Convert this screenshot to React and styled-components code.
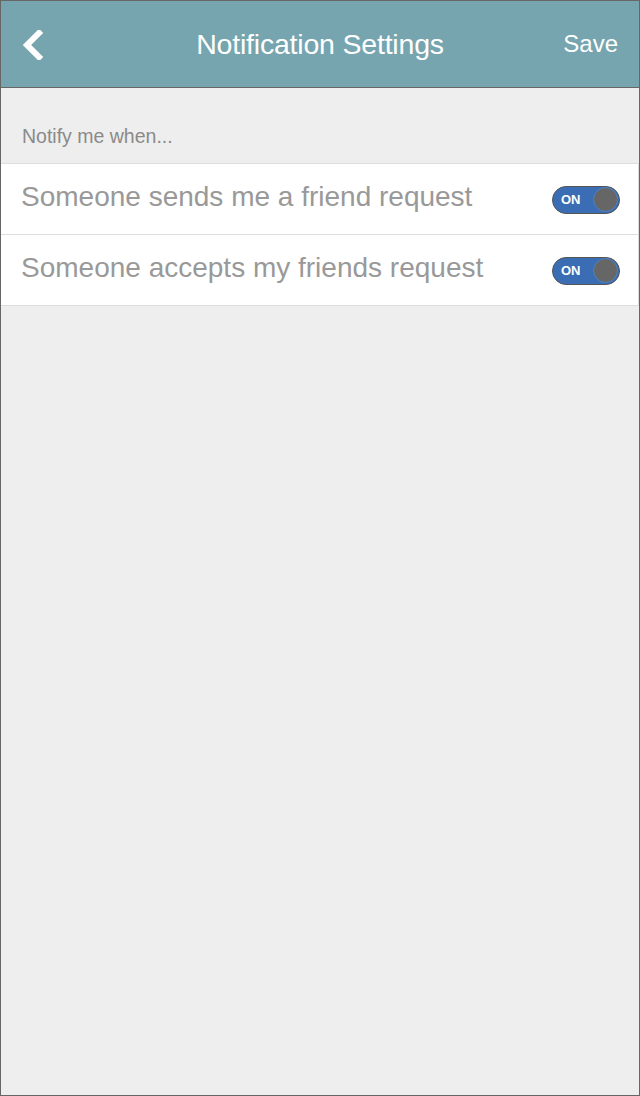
import styled, { createGlobalStyle } from 'styled-components';

const GlobalStyle = createGlobalStyle`
 html, body {
  margin: 0;
  padding: 0;
  background: #eeeeee;
 }
 * {
  box-sizing: border-box;
 }
`;

const Screen = styled.div`
 width: 640px;
 height: 1096px;
 border: 1px solid #666666;
 background: #eeeeee;
 font-family: 'Liberation Sans', Arial, sans-serif;
 display: flex;
 flex-direction: column;
`;

const Header = styled.header`
 height: 87px;
 flex-shrink: 0;
 background: #76a5af;
 border-bottom: 1px solid #666666;
 display: grid;
 grid-template-columns: 100px 1fr 100px;
 align-items: center;
 color: #ffffff;
`;

const BackButton = styled.button`
 justify-self: start;
 margin-left: 19px;
 margin-top: 1px;
 padding: 0;
 border: none;
 background: none;
 display: flex;
 cursor: pointer;
`;

const Title = styled.h1`
 margin: 0;
 text-align: center;
 font-size: 28.5px;
 font-weight: normal;
 letter-spacing: -0.2px;
`;

const SaveButton = styled.button`
 justify-self: end;
 margin-right: 21px;
 padding: 0;
 border: none;
 background: none;
 color: #ffffff;
 font-family: inherit;
 font-size: 24px;
 cursor: pointer;
`;

const SectionLabel = styled.div`
 padding: 36px 21px 15px;
 font-size: 19.5px;
 line-height: 24px;
 color: #8a8a8a;
`;

const List = styled.div`
 display: flex;
 flex-direction: column;
`;

const Row = styled.div`
 height: 72px;
 background: #ffffff;
 border: 1px solid #dddddd;
 border-left: none;
 margin-top: -1px;
 display: flex;
 align-items: center;
 justify-content: space-between;
 padding: 0 18px 0 20px;

 &:first-child {
  margin-top: 0;
 }
`;

const RowText = styled.span`
 font-size: 28px;
 color: #999999;
 margin-top: -5px;
`;

const Toggle = styled.div`
 width: 68px;
 height: 28px;
 margin-top: 1px;
 border-radius: 14px;
 background: ${(p) => (p.on ? '#3a6db4' : '#cccccc')};
 border: 1px solid #555555;
 display: flex;
 align-items: center;
 justify-content: space-between;
 padding: 0 1px 0 8px;
`;

const ToggleText = styled.span`
 font-size: 13px;
 font-weight: bold;
 color: #ffffff;
`;

const Knob = styled.span`
 width: 25px;
 height: 25px;
 border-radius: 50%;
 background: #666666;
 border: 1px solid #4a82c8;
`;

const settings = [
 { label: 'Someone sends me a friend request', on: true },
 { label: 'Someone accepts my friends request', on: true },
];

export default function App() {
 return (
  <>
   <GlobalStyle />
   <Screen>
    <Header>
     <BackButton aria-label='Back'>
      <svg width='26' height='30' viewBox='0 0 26 30'>
       <path d='M19 3 L7 15 L19 27' fill='none' stroke='#ffffff' strokeWidth='6' strokeLinecap='square' strokeLinejoin='miter' />
      </svg>
     </BackButton>
     <Title>Notification Settings</Title>
     <SaveButton>Save</SaveButton>
    </Header>
    <SectionLabel>Notify me when...</SectionLabel>
    <List>
     {settings.map((s) => (
      <Row key={s.label}>
       <RowText>{s.label}</RowText>
       <Toggle on={s.on}>
        <ToggleText>{s.on ? 'ON' : 'OFF'}</ToggleText>
        <Knob />
       </Toggle>
      </Row>
     ))}
    </List>
   </Screen>
  </>
 );
}
